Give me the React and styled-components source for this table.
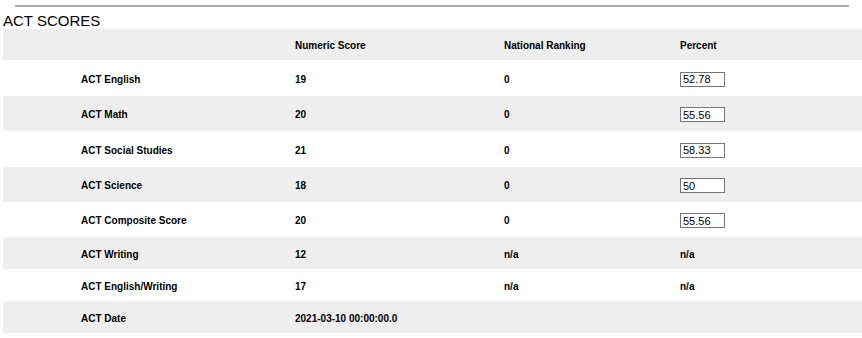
import React from "react";
import styled, { createGlobalStyle } from "styled-components";

const GlobalStyle = createGlobalStyle`
  body {
    margin: 0;
    background: #fff;
    font-family: "Liberation Sans", Arial, sans-serif;
    color: #000;
  }
`;

const Page = styled.div`
  padding: 5px 0 0 3px;
`;

const Rule = styled.div`
  height: 2px;
  margin: 0 13px 0 12px;
  background: #a8a8a8;
`;

const Title = styled.h2`
  margin: 6px 0 0;
  font-size: 15px;
  line-height: 16px;
  font-weight: normal;
`;

const Table = styled.div`
  display: grid;
  grid-template-columns: 292px 209px 176px 1fr;
`;

const Row = styled.div`
  display: contents;
  & > div {
    background: ${(p) => (p.$shade ? "#eeeeee" : "#ffffff")};
    height: ${(p) => p.$h}px;
  }
`;

const Cell = styled.div`
  box-sizing: border-box;
  display: flex;
  align-items: center;
  padding-top: 2px;
  font-size: 10px;
  font-weight: bold;
  padding-left: ${(p) => (p.$first ? 78 : 0)}px;
`;

const PercentBox = styled.input`
  box-sizing: border-box;
  width: 45px;
  height: 15px;
  margin: 0;
  padding: 0 2px;
  border: 1px solid #767676;
  border-radius: 0;
  font-family: "Liberation Sans", Arial, sans-serif;
  font-size: 11px;
  color: #000;
  background: #fff;
  outline: none;
`;

const rows = [
  { name: "ACT English", score: "19", rank: "0", pct: "52.78", h: 36 },
  { name: "ACT Math", score: "20", rank: "0", pct: "55.56", h: 35 },
  { name: "ACT Social Studies", score: "21", rank: "0", pct: "58.33", h: 36 },
  { name: "ACT Science", score: "18", rank: "0", pct: "50", h: 35 },
  { name: "ACT Composite Score", score: "20", rank: "0", pct: "55.56", h: 35 },
  { name: "ACT Writing", score: "12", rank: "n/a", text: "n/a", h: 32 },
  { name: "ACT English/Writing", score: "17", rank: "n/a", text: "n/a", h: 32 },
  { name: "ACT Date", score: "2021-03-10 00:00:00.0", rank: "", text: "", h: 32 },
];

const App = () => {
  return (
    <Page>
      <GlobalStyle />
      <Rule />
      <Title>ACT SCORES</Title>
      <Table>
        <Row $shade $h={31}>
          <Cell $first />
          <Cell>Numeric Score</Cell>
          <Cell>National Ranking</Cell>
          <Cell>Percent</Cell>
        </Row>
        {rows.map((r, i) => (
          <Row key={r.name} $shade={i % 2 === 1} $h={r.h}>
            <Cell $first>{r.name}</Cell>
            <Cell>{r.score}</Cell>
            <Cell>{r.rank}</Cell>
            <Cell>
              {r.pct !== undefined ? (
                <PercentBox type="text" defaultValue={r.pct} />
              ) : (
                r.text
              )}
            </Cell>
          </Row>
        ))}
      </Table>
    </Page>
  );
};

export default App;
